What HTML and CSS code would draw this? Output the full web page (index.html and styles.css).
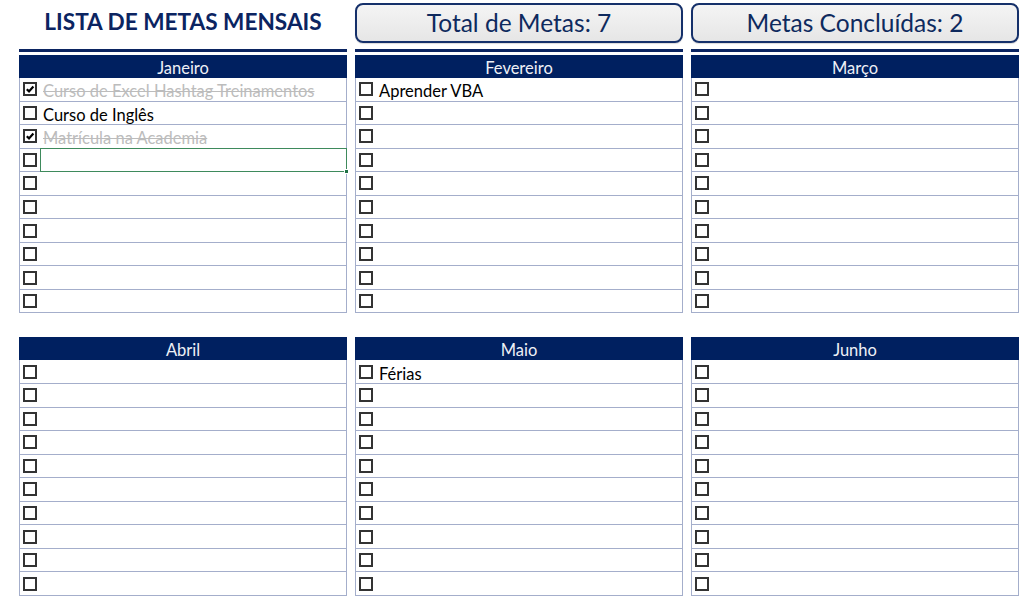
FILE: index.html
```html
<!DOCTYPE html>
<html lang="pt">
<head>
<meta charset="utf-8">
<title>Lista de Metas Mensais</title>
<link rel="stylesheet" href="styles.css">
</head>
<body>
<div class="page">
  <div class="top">
    <h1 class="title">LISTA DE METAS MENSAIS</h1>
    <div class="stat">Total de Metas: 7</div>
    <div class="stat">Metas Concluídas: 2</div>
  </div>

  <div class="grid first">
    <section class="month">
      <div class="bar"></div>
      <div class="head">Janeiro</div>
      <ul class="rows">
        <li class="row done"><span class="cb on"><svg viewBox="0 0 10 10"><path d="M1.8 5.2 L4 7.4 L8.4 2.4" /></svg></span><span class="txt">Curso de Excel Hashtag Treinamentos</span></li>
        <li class="row"><span class="cb"></span><span class="txt">Curso de Inglês</span></li>
        <li class="row done"><span class="cb on"><svg viewBox="0 0 10 10"><path d="M1.8 5.2 L4 7.4 L8.4 2.4" /></svg></span><span class="txt">Matrícula na Academia</span></li>
        <li class="row"><span class="cb"></span><span class="sel"><i class="handle"></i></span></li>
        <li class="row"><span class="cb"></span></li>
        <li class="row"><span class="cb"></span></li>
        <li class="row"><span class="cb"></span></li>
        <li class="row"><span class="cb"></span></li>
        <li class="row"><span class="cb"></span></li>
        <li class="row"><span class="cb"></span></li>
      </ul>
    </section>
    <section class="month">
      <div class="bar"></div>
      <div class="head">Fevereiro</div>
      <ul class="rows">
        <li class="row"><span class="cb"></span><span class="txt">Aprender VBA</span></li>
        <li class="row"><span class="cb"></span></li>
        <li class="row"><span class="cb"></span></li>
        <li class="row"><span class="cb"></span></li>
        <li class="row"><span class="cb"></span></li>
        <li class="row"><span class="cb"></span></li>
        <li class="row"><span class="cb"></span></li>
        <li class="row"><span class="cb"></span></li>
        <li class="row"><span class="cb"></span></li>
        <li class="row"><span class="cb"></span></li>
      </ul>
    </section>
    <section class="month">
      <div class="bar"></div>
      <div class="head">Março</div>
      <ul class="rows">
        <li class="row"><span class="cb"></span></li>
        <li class="row"><span class="cb"></span></li>
        <li class="row"><span class="cb"></span></li>
        <li class="row"><span class="cb"></span></li>
        <li class="row"><span class="cb"></span></li>
        <li class="row"><span class="cb"></span></li>
        <li class="row"><span class="cb"></span></li>
        <li class="row"><span class="cb"></span></li>
        <li class="row"><span class="cb"></span></li>
        <li class="row"><span class="cb"></span></li>
      </ul>
    </section>
  </div>

  <div class="grid second">
    <section class="month">
      <div class="head">Abril</div>
      <ul class="rows">
        <li class="row"><span class="cb"></span></li>
        <li class="row"><span class="cb"></span></li>
        <li class="row"><span class="cb"></span></li>
        <li class="row"><span class="cb"></span></li>
        <li class="row"><span class="cb"></span></li>
        <li class="row"><span class="cb"></span></li>
        <li class="row"><span class="cb"></span></li>
        <li class="row"><span class="cb"></span></li>
        <li class="row"><span class="cb"></span></li>
        <li class="row"><span class="cb"></span></li>
      </ul>
    </section>
    <section class="month">
      <div class="head">Maio</div>
      <ul class="rows">
        <li class="row"><span class="cb"></span><span class="txt">Férias</span></li>
        <li class="row"><span class="cb"></span></li>
        <li class="row"><span class="cb"></span></li>
        <li class="row"><span class="cb"></span></li>
        <li class="row"><span class="cb"></span></li>
        <li class="row"><span class="cb"></span></li>
        <li class="row"><span class="cb"></span></li>
        <li class="row"><span class="cb"></span></li>
        <li class="row"><span class="cb"></span></li>
        <li class="row"><span class="cb"></span></li>
      </ul>
    </section>
    <section class="month">
      <div class="head">Junho</div>
      <ul class="rows">
        <li class="row"><span class="cb"></span></li>
        <li class="row"><span class="cb"></span></li>
        <li class="row"><span class="cb"></span></li>
        <li class="row"><span class="cb"></span></li>
        <li class="row"><span class="cb"></span></li>
        <li class="row"><span class="cb"></span></li>
        <li class="row"><span class="cb"></span></li>
        <li class="row"><span class="cb"></span></li>
        <li class="row"><span class="cb"></span></li>
        <li class="row"><span class="cb"></span></li>
      </ul>
    </section>
  </div>
</div>
</body>
</html>
```
FILE: styles.css
```css
* { box-sizing: border-box; }
html, body {
  margin: 0;
  padding: 0;
  background: #ffffff;
}
body {
  font-family: Lato, "Open Sans", "Liberation Sans", sans-serif;
  color: #000;
}
.page {
  width: 1024px;
  height: 611px;
  padding: 3px 0 0 19px;
}
.top {
  display: grid;
  grid-template-columns: 328px 328px 328px;
  column-gap: 8px;
  height: 40px;
}
.title {
  margin: 0;
  font-size: 22.6px;
  font-weight: 700;
  color: #0b2461;
  text-align: center;
  line-height: 37px;
}
.stat {
  border: 2px solid #15306a;
  border-radius: 8px;
  background: linear-gradient(#f4f4f4, #e6e6e6);
  color: #0e2a5e;
  font-size: 24.5px;
  text-align: center;
  line-height: 35px;
  box-shadow: 0 1px 1px rgba(0,0,0,0.15);
}
.grid {
  display: grid;
  grid-template-columns: 328px 328px 328px;
  column-gap: 8px;
}
.first { margin-top: 6px; }
.second { margin-top: 24px; }
.bar {
  height: 3px;
  background: #0b2461;
  margin-bottom: 3px;
}
.head {
  height: 23px;
  background: #002060;
  color: #eef0f6;
  font-size: 16.5px;
  text-align: center;
  line-height: 26px;
}
.rows {
  list-style: none;
  margin: 0;
  padding: 0;
  border-left: 1px solid #a4aecb;
  border-right: 1px solid #a4aecb;
}
.row {
  position: relative;
  height: 23.55px;
  border-bottom: 1px solid #a4aecb;
  display: flex;
  align-items: center;
  padding-left: 3px;
  font-size: 16.5px;
}
.cb {
  flex: none;
  width: 14px;
  height: 14px;
  border: 2px solid #333;
  background: #fff;
  display: flex;
  align-items: center;
  justify-content: center;
}
.cb svg {
  width: 10px;
  height: 10px;
}
.cb path {
  fill: none;
  stroke: #000;
  stroke-width: 2.2;
}
.txt {
  margin-left: 6px;
  white-space: nowrap;
  line-height: 22px;
  padding-top: 4px;
}
.done .txt {
  color: #bcbcbc;
  text-decoration: line-through;
}
.sel {
  position: absolute;
  left: 20px;
  right: -1px;
  top: -1px;
  bottom: -1px;
  border: 1px solid #3e8a5c;
}
.handle {
  position: absolute;
  right: -3px;
  bottom: -3px;
  width: 5px;
  height: 5px;
  background: #217346;
  border: 1px solid #fff;
}
```
